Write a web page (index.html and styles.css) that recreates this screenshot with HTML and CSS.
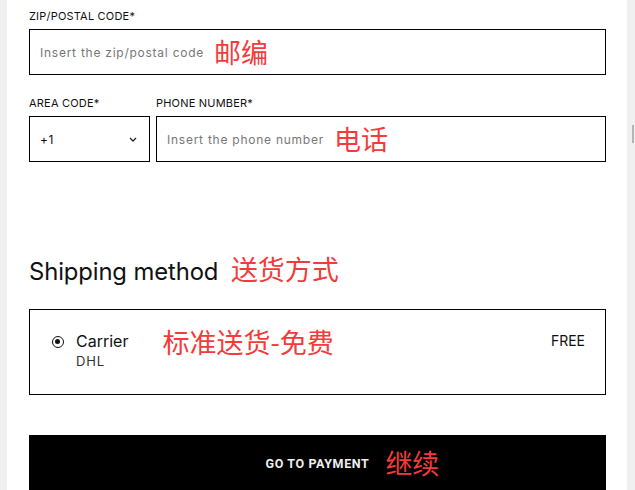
FILE: index.html
```html
<!DOCTYPE html>
<html lang="en">
<head>
    <meta charset="UTF-8">
    <meta name="viewport" content="width=device-width, initial-scale=1.0">
    <title>Checkout - Shipping</title>
    <link rel="stylesheet" href="styles.css">
</head>
<body>
    <div class="panel">
        <div class="field">
            <label class="field-label">ZIP/POSTAL CODE*</label>
            <div class="box">
                <span class="placeholder">Insert the zip/postal code</span>
                <span class="note">邮编</span>
            </div>
        </div>

        <div class="row">
            <div class="field area">
                <label class="field-label">AREA CODE*</label>
                <div class="box select">
                    <span class="value">+1</span>
                    <svg class="chevron" width="8" height="5" viewBox="0 0 8 5"><path d="M1 1l3 3 3-3" fill="none" stroke="#222" stroke-width="1.3"/></svg>
                </div>
            </div>
            <div class="field phone">
                <label class="field-label">PHONE NUMBER*</label>
                <div class="box">
                    <span class="placeholder">Insert the phone number</span>
                    <span class="note">电话</span>
                </div>
            </div>
        </div>

        <h2 class="section-title">Shipping method <span class="note">送货方式</span></h2>

        <div class="method">
            <span class="radio"></span>
            <div class="method-info">
                <div class="method-name">Carrier</div>
                <div class="method-sub">DHL</div>
            </div>
            <span class="note method-note">标准送货-免费</span>
            <span class="price">FREE</span>
        </div>

        <button class="pay-btn">
            <span class="pay-label">GO TO PAYMENT
                <span class="note pay-note">继续</span>
            </span>
        </button>
    </div>
    <div class="scroll-thumb"></div>
</body>
</html>
```

FILE: styles.css
```css
body {
    margin: 0;
    background-color: #f0f0f0;
    font-family: Inter, "Noto Sans", Arial, sans-serif;
    color: #111;
}
.panel {
    width: 620px;
    margin-left: 7px;
    background-color: #fff;
    min-height: 490px;
    padding: 9px 21px 0 22px;
    box-sizing: border-box;
}
.scroll-thumb {
    position: fixed;
    top: 125px;
    right: 1px;
    width: 2px;
    height: 18px;
    background-color: #b5b5b5;
}
.note {
    font-family: "Noto Sans CJK SC", sans-serif;
    color: #f33b3c;
    font-size: 27px;
    font-weight: normal;
    letter-spacing: 0;
    line-height: 30px;
}
.field-label {
    display: block;
    font-size: 11px;
    letter-spacing: 0.2px;
    line-height: 14px;
    margin-bottom: 6px;
}
.box {
    height: 46px;
    border: 1.5px solid #000;
    box-sizing: border-box;
    display: flex;
    align-items: center;
    padding: 0 10px;
}
.placeholder {
    font-size: 12px;
    letter-spacing: 0.75px;
    color: #777;
    margin-right: 10px;
}
.row {
    display: flex;
    gap: 6px;
    margin-top: 21px;
}
.area {
    width: 121px;
}
.phone {
    flex: 1;
}
.select {
    justify-content: space-between;
    padding-right: 12px;
}
.value {
    font-size: 12px;
    letter-spacing: 0.5px;
}
.section-title {
    font-size: 23.8px;
    font-weight: normal;
    letter-spacing: -0.1px;
    margin: 92px 0 0;
    line-height: 30px;
}
.section-title .note {
    margin-left: 6px;
}
.method {
    margin-top: 22px;
    height: 86px;
    border: 1.5px solid #000;
    box-sizing: border-box;
    display: flex;
    align-items: flex-start;
    padding: 21px 20px 0 22px;
}
.radio {
    width: 12px;
    height: 12px;
    border: 1.5px solid #111;
    border-radius: 50%;
    box-sizing: border-box;
    margin-top: 5px;
    position: relative;
    flex-shrink: 0;
}
.radio::after {
    content: "";
    position: absolute;
    top: 2px;
    left: 2px;
    width: 5px;
    height: 5px;
    border-radius: 50%;
    background-color: #111;
}
.method-info {
    margin-left: 12px;
}
.method-name {
    font-size: 16px;
    line-height: 20px;
}
.method-sub {
    font-size: 13px;
    letter-spacing: 0.8px;
    color: #333;
    margin-top: 2px;
}
.method-note {
    margin-left: 34px;
    margin-top: -4px;
}
.price {
    margin-left: auto;
    font-size: 14px;
    line-height: 20px;
}
.pay-btn {
    display: flex;
    align-items: center;
    justify-content: center;
    width: 100%;
    height: 56px;
    margin-top: 40px;
    border: none;
    background-color: #000;
    color: #eee;
    font-family: Roboto, Arial, sans-serif;
    font-weight: bold;
    font-size: 12.5px;
    letter-spacing: 0.6px;
    padding: 0;
}
.pay-label {
    position: relative;
}
.pay-note {
    position: absolute;
    left: 100%;
    top: 50%;
    margin-left: 16px;
    transform: translateY(-50%);
    white-space: nowrap;
}
```
